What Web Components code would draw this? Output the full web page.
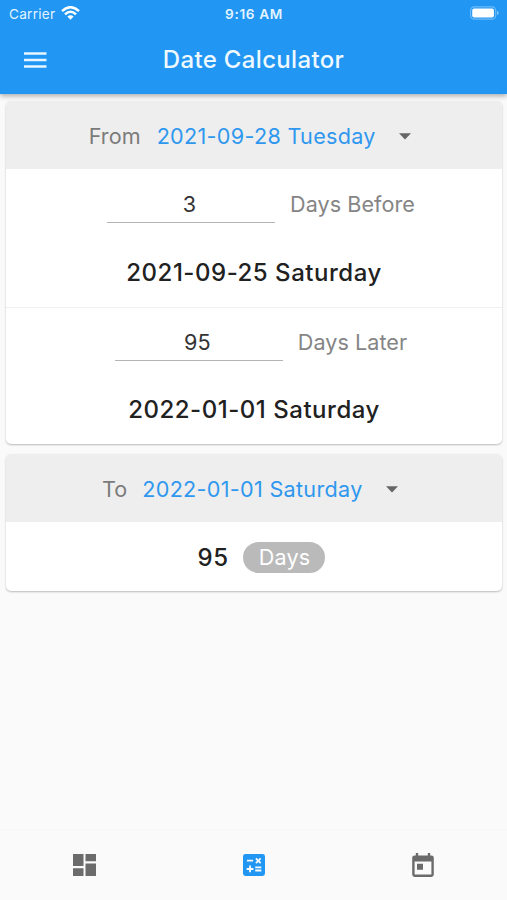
<!DOCTYPE html>
<html lang="en">
<head>
<meta charset="utf-8">
<title>Date Calculator</title>
<style>
html,body{margin:0;height:100%}
body{font-family:Inter,"Liberation Sans",sans-serif;background:#fafafa;overflow:hidden}
</style>
</head>
<body>
<date-app></date-app>
<script>
const define = (name, html) => {
  const t = document.createElement('template');
  t.innerHTML = html;
  customElements.define(name, class extends HTMLElement {
    constructor() {
      super();
      this.attachShadow({mode: 'open'}).append(t.content.cloneNode(true));
    }
  });
};

define('status-bar', `<style>
:host{display:grid;grid-template-columns:1fr auto 1fr;align-items:center;height:27px;color:#e3f4ff;font-size:13.6px;box-sizing:border-box;padding:0 8px 0 9px}
.l{display:flex;align-items:center;gap:6px;letter-spacing:.25px}
.t{font-weight:600;font-size:13.6px;letter-spacing:.65px}
.r{display:flex;justify-content:flex-end}
svg{display:block;position:relative;top:-.5px}
</style>
<div class="l"><span>Carrier</span><svg width="19" height="14" viewBox="0 0 19 14"><g fill="none" stroke="#fff" stroke-width="2.5"><path d="M1 5.1Q9.500-2.700 18 5.100"/><path d="M4 8.300Q9.500 3.300 15 8.300"/></g><path d="M9.500 13.700L6.400 10.600Q9.500 8 12.600 10.600Z" fill="#fff"/></svg></div>
<span class="t">9:16 AM</span>
<div class="r"><svg width="29" height="14" viewBox="0 0 30 14"><rect x=".6" y=".6" width="26" height="12.800" rx="3.800" fill="none" stroke="#fff" stroke-opacity=".35" stroke-width="1.200"/><rect x="2.300" y="2.300" width="22.500" height="9.400" rx="2" fill="#fff"/><path d="M28 5v4q1.600-.5 1.600-2T28 5" fill="#fff" opacity=".5"/></svg></div>`);

define('app-bar', `<style>
:host{display:block;height:94px;background:#2196f3;box-shadow:0 2px 5px rgba(0,0,0,.32);position:relative;z-index:1}
.bar{display:grid;grid-template-columns:70px 1fr 70px;align-items:center;height:66px}
svg{display:block;margin-left:24px}
h1{margin:0;text-align:center;color:#eef9ff;font-size:24px;font-weight:500;letter-spacing:.33px;line-height:30px}
</style>
<status-bar></status-bar>
<div class="bar"><svg width="23" height="16" viewBox="0 0 23 16"><path d="M0 1.400h22.500M0 7.900h22.500M0 14.400h22.500" stroke="#e8f6ff" stroke-width="2.500"/></svg><h1><slot></slot></h1></div>`);

define('paper-card', `<style>
:host{display:block;margin:0 5px 0 6px;background:#fff;border-radius:5px;overflow:hidden;box-shadow:0 1px 2px rgba(0,0,0,.26)}
</style><slot></slot>`);

define('date-select', `<style>
:host{display:flex;align-items:center;justify-content:center;box-sizing:border-box;height:68px;padding:2px 8px 0 0;background:#eee;font-size:21.6px;color:#7b7b7b;letter-spacing:.05px;line-height:30px;white-space:nowrap}
.v{color:#2f98ee;margin-left:var(--label-gap,16px);letter-spacing:.3px}
svg{display:block;margin-left:23.500px}
</style><slot name="label"></slot><span class="v"><slot></slot></span><svg width="12" height="7" viewBox="0 0 12 7"><path d="M0 .2h12L6 6.500Z" fill="#666"/></svg>`);

define('day-offset', `<style>
:host{display:block;height:138px;box-sizing:border-box}
:host([divided]){border-top:1px solid #f0f0f0;height:137px}
:host([divided]) .row{height:66px}
:host([divided]) .n{height:37px;padding-top:3px}
.row{display:flex;justify-content:center;height:68px;padding-left:14px;align-items:center;font-size:21.6px;line-height:30px;color:#333;white-space:nowrap}
.n{width:168px;box-sizing:border-box;height:38px;border-bottom:1.500px solid #b4b4b4;text-align:center;padding-top:4px;margin-top:2px;padding-right:3px}
.u{color:#858585;margin-left:15px;padding-top:2px;letter-spacing:.05px}
.res{display:flex;justify-content:center;align-items:center;height:70px;font-size:24px;font-weight:500;color:#212121;letter-spacing:.52px}
</style><div class="row"><div class="n"><slot name="count"></slot></div><span class="u"><slot name="unit"></slot></span></div><div class="res"><slot></slot></div>`);

define('day-total', `<style>
:host{display:flex;align-items:center;justify-content:center;gap:15px;height:69px;padding:1px 0 0 15px;box-sizing:border-box;font-size:24px;color:#212121;font-weight:500;letter-spacing:.5px}
.pill{background:#bababa;color:#fff;font-size:21.6px;font-weight:400;border-radius:16px;height:31px;line-height:31px;width:82px;text-align:center;letter-spacing:.1px}
</style><slot></slot><span class="pill"><slot name="unit"></slot></span>`);

define('tab-bar', `<style>
:host{display:grid;grid-template-columns:repeat(3,1fr);justify-items:center;align-items:center;height:71px;border-top:1px solid #f7f7f7;box-sizing:border-box;background:#fafafa}
svg{display:block;fill:#6b6b6b}
</style>
<svg width="23" height="22" viewBox="0 0 23 23" preserveAspectRatio="none"><path d="M0 0h10.500v12.500H0zM12.500 0H23v7.500H12.500zM0 15h10.500v8H0zM12.500 10H23v13H12.500z"/></svg>
<svg width="22" height="22" viewBox="3 3 18 18" style="fill:#2196f3"><path d="M19 3H5a2 2 0 0 0-2 2v14a2 2 0 0 0 2 2h14a2 2 0 0 0 2-2V5a2 2 0 0 0-2-2zm-5.970 4.060L14.090 6l1.410 1.410L16.910 6l1.060 1.060-1.410 1.410 1.410 1.410-1.060 1.060-1.410-1.410-1.410 1.410-1.060-1.060 1.410-1.410zM6.250 7.720h5v1.500h-5zM11.500 16h-2v2H8v-2H6v-1.500h2v-2h1.500v2h2zm6.500 1.250h-5v-1.500h5zm0-2.500h-5v-1.500h5z"/></svg>
<svg width="22" height="24" viewBox="3 1 18 20"><path d="M19 3h-1V1h-2v2H8V1H6v2H5a2 2 0 0 0-2 2v14a2 2 0 0 0 2 2h14a2 2 0 0 0 2-2V5a2 2 0 0 0-2-2zm0 16H5V8h14zM7 10h5v5H7z"/></svg>`);

define('date-app', `<style>
:host{display:flex;flex-direction:column;height:900px;background:#fafafa}
main{flex:1;display:flex;flex-direction:column;gap:10px;padding-top:7px}
</style>
<app-bar>Date Calculator</app-bar>
<main>
<paper-card>
<date-select><span slot="label">From</span>2021-09-28 Tuesday</date-select>
<day-offset><span slot="count">3</span><span slot="unit">Days Before</span>2021-09-25 Saturday</day-offset>
<day-offset divided><span slot="count">95</span><span slot="unit">Days Later</span>2022-01-01 Saturday</day-offset>
</paper-card>
<paper-card>
<date-select style="--label-gap:15px"><span slot="label">To</span>2022-01-01 Saturday</date-select>
<day-total>95<span slot="unit">Days</span></day-total>
</paper-card>
</main>
<tab-bar></tab-bar>`);
</script>
</body>
</html>
